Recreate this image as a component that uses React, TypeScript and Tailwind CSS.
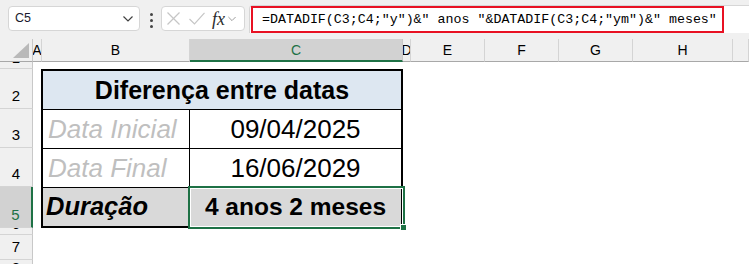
import React from "react";

const colHeaders: { label: string; cls: string; sel?: boolean }[] = [
  { label: "A", cls: "col-start-2" },
  { label: "B", cls: "col-start-3" },
  { label: "C", cls: "col-start-4", sel: true },
  { label: "D", cls: "col-start-5" },
  { label: "E", cls: "col-start-6" },
  { label: "F", cls: "col-start-7" },
  { label: "G", cls: "col-start-8" },
  { label: "H", cls: "col-start-9" },
  { label: "", cls: "col-start-10" },
];

const rowHeaders: { label: string; cls: string; sel?: boolean; tiny?: boolean }[] = [
  { label: "1", cls: "row-start-2", tiny: true },
  { label: "2", cls: "row-start-3" },
  { label: "3", cls: "row-start-4" },
  { label: "4", cls: "row-start-5" },
  { label: "5", cls: "row-start-6", sel: true },
  { label: "6", cls: "row-start-7", tiny: true },
  { label: "7", cls: "row-start-8" },
  { label: "8", cls: "row-start-9" },
];

function Chevron({ className }: { className?: string }) {
  return (
    <svg className={className} width="10" height="6" viewBox="0 0 10 6">
      <polyline points="0.5,0.5 5,5 9.5,0.5" fill="none" stroke="currentColor" strokeWidth="1.2" />
    </svg>
  );
}

const SANS = '"Liberation Sans", Arial, sans-serif';

export default function App() {
  return (
    <div className="w-[749px] h-[264px] overflow-hidden bg-white flex flex-col" style={{ fontFamily: SANS }}>
      {/* Top bar */}
      <div className="h-[39px] shrink-0 bg-[#f0f0f0] flex items-start pt-[6px] pl-[8px]">
        <div className="w-[132px] h-[25px] bg-white border border-[#d6d6d6] rounded-[4px] flex items-center justify-between pl-[6px] pr-[6px]">
          <span className="text-[12.5px] text-[#1a1a2e] leading-none">C5</span>
          <Chevron className="text-[#404040]" />
        </div>
        <div className="ml-[10px] mt-[7px] flex flex-col gap-[3px]">
          <div className="w-[3px] h-[3px] bg-[#444] rounded-full" />
          <div className="w-[3px] h-[3px] bg-[#444] rounded-full" />
          <div className="w-[3px] h-[3px] bg-[#444] rounded-full" />
        </div>
        <div className="ml-[8px] w-[84px] h-[25px] bg-white border border-[#d6d6d6] rounded-[4px] flex items-center pl-[5px]">
          <svg width="13" height="13" viewBox="0 0 13 13">
            <line x1="0.5" y1="0.5" x2="12.5" y2="12.5" stroke="#c6c6c6" strokeWidth="1.2" />
            <line x1="12.5" y1="0.5" x2="0.5" y2="12.5" stroke="#c6c6c6" strokeWidth="1.2" />
          </svg>
          <svg className="ml-[9px]" width="16" height="13" viewBox="0 0 16 13">
            <polyline points="0.5,7 5.5,12 15.5,0.8" fill="none" stroke="#c6c6c6" strokeWidth="1.2" />
          </svg>
          <span className="ml-[7px] text-[18px] leading-none italic text-[#2b2b2b]" style={{ fontFamily: '"Liberation Serif", serif' }}>
            fx
          </span>
          <Chevron className="ml-[3px] text-[#9a9a9a] w-[8px]" />
        </div>
        <div className="ml-[4px] flex-1 h-[28px] -mt-[1px] bg-white border-t border-l border-[#d6d6d6] rounded-tl-[4px] pl-[1px]">
          <div className="w-[473px] h-[27px] border-2 border-[#e81123] flex items-center pl-[9px]">
            <span className="text-[13.3px] text-black whitespace-pre leading-none" style={{ fontFamily: '"Liberation Mono", monospace' }}>
              {'=DATADIF(C3;C4;"y")&" anos "&DATADIF(C3;C4;"ym")&" meses"'}
            </span>
          </div>
        </div>
      </div>

      {/* Sheet */}
      <div className="flex-1 grid grid-cols-[33px_9px_148px_213px_8px_74px_74px_74px_100px_1fr] grid-rows-[23px_7px_40px_39px_39px_41px_7px_25px_1fr]">
        {/* corner */}
        <div className="col-start-1 row-start-1 bg-[#f0f0f0] border-r border-b border-r-[#c8c8c8] border-b-[#a8a8a8] flex items-end justify-end pr-[3px] pb-[3px]">
          <svg width="16" height="15" viewBox="0 0 16 15">
            <polygon points="16,0 16,15 0,15" fill="#b9b9b9" />
          </svg>
        </div>
        {colHeaders.map((c) => (
          <div
            key={c.cls}
            className={
              c.cls +
              " row-start-1 overflow-hidden flex items-center justify-center text-[14px] leading-none " +
              (c.sel
                ? "bg-[#d2d2d2] border-b-2 border-b-[#1e7145] text-[#1e7145] border-r border-r-[#c8c8c8]"
                : "bg-[#f0f0f0] border-b border-b-[#a8a8a8] border-r border-r-[#d4d4d4] text-black")
            }
          >
            {c.label}
          </div>
        ))}
        {rowHeaders.map((r) => (
          <div
            key={r.cls}
            className={
              r.cls +
              " col-start-1 overflow-hidden flex justify-center text-[15px] leading-none " +
              (r.tiny ? "items-start " : "items-end pb-[5px] ") +
              (r.sel
                ? "bg-[#d2d2d2] border-r-2 border-r-[#1e7145] text-[#1e7145] border-b border-b-[#d4d4d4]"
                : "bg-[#f0f0f0] border-r border-r-[#c8c8c8] border-b border-b-[#d4d4d4] text-black")
            }
          >
            <span className={r.tiny ? "-mt-[12px]" : ""}>{r.label}</span>
          </div>
        ))}

        {/* Table B2:C5 */}
        <div className="col-start-3 col-span-2 row-start-3 row-span-4 -ml-px border-2 border-black grid grid-cols-[147px_1fr] grid-rows-[39px_39px_39px_1fr] text-black">
          <div className="col-span-2 bg-[#dde7f1] border-b border-black flex items-center justify-center text-[25px] font-bold leading-none">
            Diferença entre datas
          </div>
          <div className="border-r border-b border-black flex items-center pl-[5px] text-[26px] italic text-[#bfbfbf] leading-none">
            Data Inicial
          </div>
          <div className="border-b border-black flex items-center justify-center text-[26px] leading-none">09/04/2025</div>
          <div className="border-r border-b border-black flex items-center pl-[5px] text-[26px] italic text-[#bfbfbf] leading-none">
            Data Final
          </div>
          <div className="border-b border-black flex items-center justify-center text-[26px] leading-none">16/06/2029</div>
          <div className="bg-[#d9d9d9] border-r border-black flex items-center pl-[3px] text-[25.5px] italic font-bold leading-none">
            Duração
          </div>
          <div className="relative bg-[#d9d9d9] flex items-center justify-center text-[24.5px] font-bold leading-none">
            4 anos 2 meses
            <div className="absolute -left-[2px] -top-[2px] -right-[4px] -bottom-[3px] border-2 border-[#1e7145] shadow-[inset_0_0_0_1px_white]" />
            <div className="absolute -right-[6px] -bottom-[5px] w-[7px] h-[7px] bg-[#1e7145] border border-white" />
          </div>
        </div>
      </div>
    </div>
  );
}
